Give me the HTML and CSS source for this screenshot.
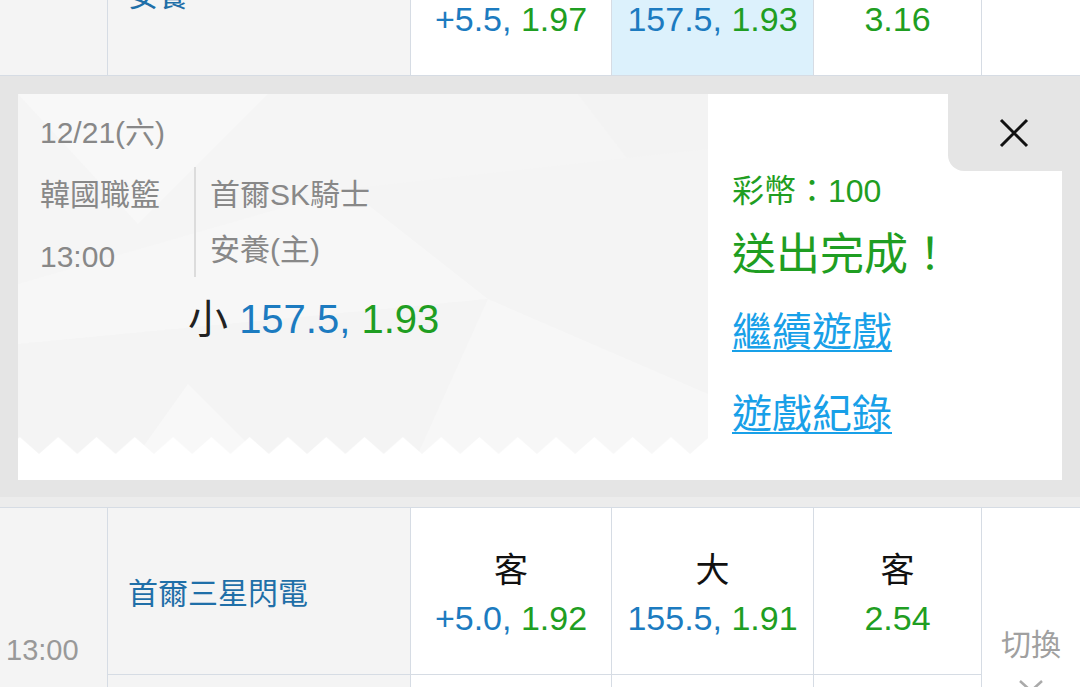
FILE: index.html
```html
<!DOCTYPE html>
<html lang="zh-Hant">
<head>
	<meta charset="UTF-8">
	<title>投注完成</title>
	<link rel="stylesheet" href="styles.css">
</head>
<body>
	<div class="page">
		<!-- previous match, home row (label line sits above the fold) -->
		<div class="match prev">
			<div class="cell time"></div>
			<div class="cell team"><span class="name">安養</span></div>
			<div class="cell odd"><span><span class="b">+5.5,</span> <span class="g">1.97</span></span></div>
			<div class="cell odd pick"><span><span class="b">157.5,</span> <span class="g">1.93</span></span></div>
			<div class="cell odd"><span class="g">3.16</span></div>
			<div class="cell side"></div>
		</div>

		<div class="band">
			<div class="card">
				<div class="ticket">
					<svg class="ticket-bg" width="690" height="386" viewBox="0 0 690 386">
						<defs>
							<pattern id="zz" x="21" y="343" width="38.3" height="17" patternUnits="userSpaceOnUse">
								<polygon points="0,17 19.15,0 38.3,17" fill="#fff"/>
							</pattern>
						</defs>
						<rect width="690" height="360" fill="#f5f5f5"/>
						<polygon points="0,0 250,0 120,130" fill="#f8f8f8"/>
						<polygon points="560,0 690,0 690,170" fill="#f3f3f3"/>
						<polygon points="0,190 330,95 470,205 0,250" fill="#f7f7f7"/>
						<polygon points="330,95 690,55 690,300 470,205" fill="#f4f4f4"/>
						<polygon points="0,250 470,205 400,360 0,360" fill="#f4f4f4"/>
						<polygon points="470,205 690,300 690,360 400,360" fill="#f7f7f7"/>
						<polygon points="120,360 170,290 240,360" fill="#f8f8f8"/>
						<rect y="343" width="690" height="17" fill="url(#zz)"/>
						<rect y="360" width="690" height="26" fill="#fff"/>
					</svg>
					<div class="date">12/21(六)</div>
					<div class="info">
						<div class="league">
							<div>韓國職籃</div>
							<div class="kick">13:00</div>
						</div>
						<div class="teams">
							<div>首爾SK騎士</div>
							<div>安養(主)</div>
						</div>
					</div>
					<div class="bet">小 <span class="b">157.5,</span> <span class="g">1.93</span></div>
				</div>
				<div class="result">
					<button type="button" class="close">
						<svg width="30" height="30" viewBox="0 0 30 30"><path d="M2 2 L28 28 M28 2 L2 28" stroke="#111" stroke-width="3" fill="none"/></svg>
					</button>
					<div class="coin">彩幣：100</div>
					<div class="done">送出完成！</div>
					<a class="link" href="#">繼續遊戲</a>
					<a class="link second" href="#">遊戲紀錄</a>
				</div>
			</div>
		</div>
		<div class="band-foot"></div>

		<!-- next match -->
		<div class="match next">
			<div class="cell time span2">13:00</div>
			<div class="cell team">首爾三星閃電</div>
			<div class="cell odd"><span class="lbl">客</span><span><span class="b">+5.0,</span> <span class="g">1.92</span></span></div>
			<div class="cell odd"><span class="lbl">大</span><span><span class="b">155.5,</span> <span class="g">1.91</span></span></div>
			<div class="cell odd"><span class="lbl">客</span><span class="g">2.54</span></div>
			<div class="cell side span2">
				<span>切換</span>
				<svg width="26" height="14" viewBox="0 0 26 14"><polyline points="2,2 13,12 24,2" stroke="#aaa" stroke-width="2.5" fill="none"/></svg>
			</div>
			<div class="cell team"></div>
			<div class="cell odd"></div>
			<div class="cell odd"></div>
			<div class="cell odd"></div>
		</div>
	</div>
</body>
</html>
```

FILE: styles.css
```css
* {
	margin: 0;
	padding: 0;
	box-sizing: border-box;
}

body {
	width: 1080px;
	overflow: hidden;
	background: #fff;
	font-family: "Liberation Sans", "Noto Sans CJK TC", sans-serif;
}

.b {
	color: #1c7bc0;
}
.g {
	color: #1f9e22;
}

/* match table */
.match {
	display: grid;
	grid-template-columns: 108px 303px 201px 202px 168px 98px;
}
.prev {
	grid-template-rows: 76px;
}
.next {
	grid-template-rows: 167px 167px;
}

.cell {
	border-right: 1px solid #d6dce4;
	border-bottom: 1px solid #d6dce4;
}
.span2 {
	grid-row: span 2;
}

.time {
	background: #f4f4f4;
}
.next .time {
	padding: 118px 0 0 6px;
	font-size: 29px;
	line-height: 48px;
	color: #999;
}

.team {
	display: flex;
	align-items: center;
	padding-left: 20px;
	background: #f4f4f4;
	font-size: 30px;
	color: #1f6fa8;
}
.prev .team {
	align-items: flex-start;
	line-height: 30px;
}
.prev .team .name {
	margin-top: -19px;
}

.odd {
	display: flex;
	flex-direction: column;
	align-items: center;
	padding-top: 38px;
	font-size: 34px;
	line-height: 48px;
}
.prev .odd {
	padding-top: 0;
	line-height: 38px;
}
.odd .lbl {
	color: #111;
}
.pick {
	background: #dcf1fc;
}

.side {
	border-right: none;
}
.next .side {
	display: flex;
	flex-direction: column;
	align-items: center;
	padding-top: 117px;
	font-size: 30px;
	line-height: 40px;
	color: #a0a0a0;
}
.next .side svg {
	margin-top: 14px;
}

/* overlay band */
.band {
	padding: 18px 18px 17px;
	background: #e5e5e5;
}
.band-foot {
	height: 11px;
	background: #ececec;
	border-bottom: 1px solid #d6dce4;
}

.card {
	display: flex;
	height: 386px;
	background: #fff;
}

.ticket {
	position: relative;
	width: 690px;
	padding: 19px 0 0 22px;
}
.ticket-bg {
	position: absolute;
	left: 0;
	top: 0;
}
.ticket > div {
	position: relative;
}

.date {
	font-size: 30px;
	line-height: 40px;
	color: #888;
}

.info {
	display: flex;
	margin-top: 14px;
}
.league {
	width: 154px;
	font-size: 30px;
	line-height: 56px;
	color: #888;
}
.league .kick {
	margin-top: 6px;
}
.teams {
	border-left: 2px solid #dcdcdc;
	padding-left: 14px;
	font-size: 30px;
	line-height: 55px;
	color: #888;
	align-self: flex-start;
}

.bet {
	margin: 9px 0 0 148px;
	font-size: 40px;
	line-height: 50px;
	color: #222;
}

.result {
	flex: 1;
	display: flex;
	flex-direction: column;
	padding-left: 24px;
}
.close {
	align-self: flex-end;
	display: flex;
	align-items: center;
	justify-content: center;
	width: 114px;
	height: 77px;
	padding-left: 18px;
	border: none;
	border-bottom-left-radius: 16px;
	background: #e5e5e5;
}
.coin {
	margin-top: -2px;
	font-size: 32px;
	line-height: 44px;
	color: #1f9e22;
}
.done {
	font-size: 44px;
	line-height: 84px;
	color: #1f9e22;
}
.link {
	align-self: flex-start;
	font-size: 40px;
	line-height: 70px;
	color: #18a0e8;
	text-decoration: underline;
	text-decoration-thickness: 2px;
	text-underline-offset: 4px;
}
.link.second {
	margin-top: 12px;
}
```
